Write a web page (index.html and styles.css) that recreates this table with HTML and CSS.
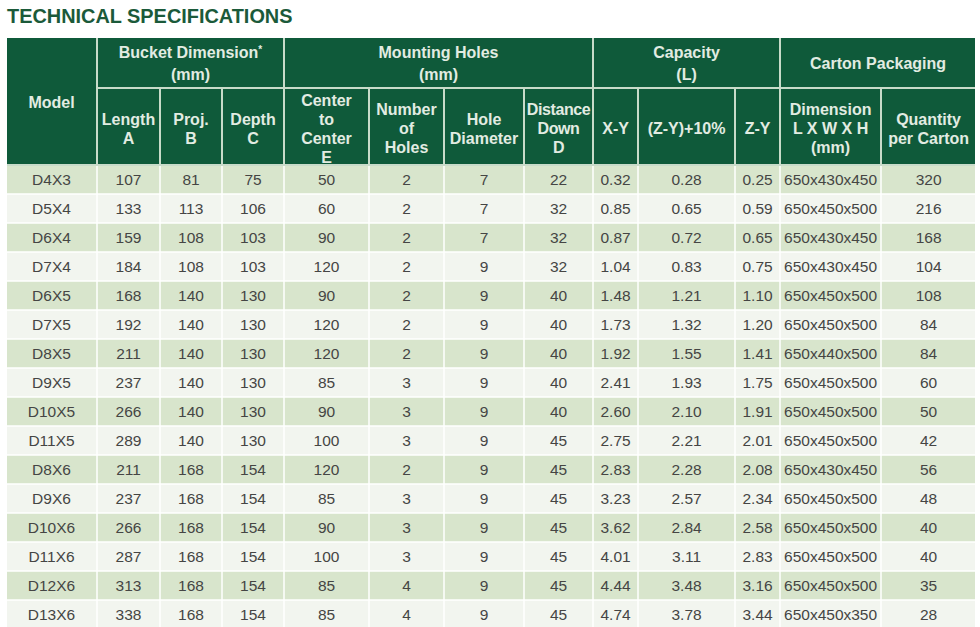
FILE: index.html
```html
<!DOCTYPE html>
<html>
<head>
<meta charset="utf-8">
<link rel="stylesheet" href="styles.css">
</head>
<body>
<div class="page">
  <h1 class="title">TECHNICAL SPECIFICATIONS</h1>
  <table class="spec">
    <colgroup>
      <col style="width:90px"><col style="width:63px"><col style="width:62px"><col style="width:62px">
      <col style="width:85px"><col style="width:75px"><col style="width:80px"><col style="width:69px">
      <col style="width:45px"><col style="width:97px"><col style="width:45px"><col style="width:101px"><col style="width:94px">
    </colgroup>
    <thead>
      <tr class="h1">
        <th rowspan="2" class="model">Model</th>
        <th colspan="3">Bucket Dimension<span class="ast">*</span><br>(mm)</th>
        <th colspan="4">Mounting Holes<br>(mm)</th>
        <th colspan="3">Capacity<br>(L)</th>
        <th colspan="2">Carton Packaging</th>
      </tr>
      <tr class="h2">
        <th><div class="hc">Length<br>A</div></th>
        <th><div class="hc">Proj.<br>B</div></th>
        <th><div class="hc">Depth<br>C</div></th>
        <th><div class="hc">Center<br>to<br>Center<br>E</div></th>
        <th><div class="hc">Number<br>of<br>Holes</div></th>
        <th><div class="hc">Hole<br>Diameter</div></th>
        <th class="tight"><div class="hc">Distance<br>Down<br>D</div></th>
        <th><div class="hc">X-Y</div></th>
        <th><div class="hc">(Z-Y)+10%</div></th>
        <th><div class="hc">Z-Y</div></th>
        <th><div class="hc">Dimension<br>L X W X H<br>(mm)</div></th>
        <th><div class="hc">Quantity<br>per Carton</div></th>
      </tr>
    </thead>
    <tbody>
      <tr><td>D4X3</td><td>107</td><td>81</td><td>75</td><td>50</td><td>2</td><td>7</td><td>22</td><td>0.32</td><td>0.28</td><td>0.25</td><td>650x430x450</td><td>320</td></tr>
      <tr><td>D5X4</td><td>133</td><td>113</td><td>106</td><td>60</td><td>2</td><td>7</td><td>32</td><td>0.85</td><td>0.65</td><td>0.59</td><td>650x450x500</td><td>216</td></tr>
      <tr><td>D6X4</td><td>159</td><td>108</td><td>103</td><td>90</td><td>2</td><td>7</td><td>32</td><td>0.87</td><td>0.72</td><td>0.65</td><td>650x430x450</td><td>168</td></tr>
      <tr><td>D7X4</td><td>184</td><td>108</td><td>103</td><td>120</td><td>2</td><td>9</td><td>32</td><td>1.04</td><td>0.83</td><td>0.75</td><td>650x430x450</td><td>104</td></tr>
      <tr><td>D6X5</td><td>168</td><td>140</td><td>130</td><td>90</td><td>2</td><td>9</td><td>40</td><td>1.48</td><td>1.21</td><td>1.10</td><td>650x450x500</td><td>108</td></tr>
      <tr><td>D7X5</td><td>192</td><td>140</td><td>130</td><td>120</td><td>2</td><td>9</td><td>40</td><td>1.73</td><td>1.32</td><td>1.20</td><td>650x450x500</td><td>84</td></tr>
      <tr><td>D8X5</td><td>211</td><td>140</td><td>130</td><td>120</td><td>2</td><td>9</td><td>40</td><td>1.92</td><td>1.55</td><td>1.41</td><td>650x440x500</td><td>84</td></tr>
      <tr><td>D9X5</td><td>237</td><td>140</td><td>130</td><td>85</td><td>3</td><td>9</td><td>40</td><td>2.41</td><td>1.93</td><td>1.75</td><td>650x450x500</td><td>60</td></tr>
      <tr><td>D10X5</td><td>266</td><td>140</td><td>130</td><td>90</td><td>3</td><td>9</td><td>40</td><td>2.60</td><td>2.10</td><td>1.91</td><td>650x450x500</td><td>50</td></tr>
      <tr><td>D11X5</td><td>289</td><td>140</td><td>130</td><td>100</td><td>3</td><td>9</td><td>45</td><td>2.75</td><td>2.21</td><td>2.01</td><td>650x450x500</td><td>42</td></tr>
      <tr><td>D8X6</td><td>211</td><td>168</td><td>154</td><td>120</td><td>2</td><td>9</td><td>45</td><td>2.83</td><td>2.28</td><td>2.08</td><td>650x430x450</td><td>56</td></tr>
      <tr><td>D9X6</td><td>237</td><td>168</td><td>154</td><td>85</td><td>3</td><td>9</td><td>45</td><td>3.23</td><td>2.57</td><td>2.34</td><td>650x450x500</td><td>48</td></tr>
      <tr><td>D10X6</td><td>266</td><td>168</td><td>154</td><td>90</td><td>3</td><td>9</td><td>45</td><td>3.62</td><td>2.84</td><td>2.58</td><td>650x450x500</td><td>40</td></tr>
      <tr><td>D11X6</td><td>287</td><td>168</td><td>154</td><td>100</td><td>3</td><td>9</td><td>45</td><td>4.01</td><td>3.11</td><td>2.83</td><td>650x450x500</td><td>40</td></tr>
      <tr><td>D12X6</td><td>313</td><td>168</td><td>154</td><td>85</td><td>4</td><td>9</td><td>45</td><td>4.44</td><td>3.48</td><td>3.16</td><td>650x450x500</td><td>35</td></tr>
      <tr><td>D13X6</td><td>338</td><td>168</td><td>154</td><td>85</td><td>4</td><td>9</td><td>45</td><td>4.74</td><td>3.78</td><td>3.44</td><td>650x450x350</td><td>28</td></tr>
    </tbody>
  </table>
</div>
</body>
</html>
```
FILE: styles.css
```css
html, body {
  margin: 0;
  padding: 0;
  background: #ffffff;
}
.page {
  padding: 4px 5px 0 7px;
  font-family: "Liberation Sans", Arial, sans-serif;
}
.title {
  margin: 0 0 10px 0;
  font-size: 19.9px;
  line-height: 24px;
  font-weight: bold;
  color: #1b5a3a;
}
.spec {
  width: 968px;
  table-layout: fixed;
  border-collapse: collapse;
}
.spec th {
  background: #0f5a3a;
  color: #e2ece2;
  font-weight: bold;
  font-size: 16px;
  text-align: center;
  vertical-align: middle;
  padding: 0;
  border: 2px solid #c8dbc9;
  white-space: nowrap;
  overflow: visible;
}
.ast {
  font-size: 10px;
  vertical-align: 5px;
  line-height: 0;
}
.spec thead tr:first-child th {
  border-top: none;
}
.spec th:first-child { border-left: none; }
.spec tr.h1 th:last-child, .spec tr.h2 th:last-child { border-right: none; }
.spec tr.h1 th {
  height: 46px;
  padding-top: 3px;
  line-height: 22px;
}
.spec tr.h1 th.model {
  padding-top: 2px;
  line-height: 19px;
}
.spec tr.h2 th {
  height: 75px;
}
.hc {
  line-height: 19px;
  margin-bottom: -4px;
}
.spec th.tight {
  letter-spacing: -0.4px;
}
.spec td {
  height: 27px;
  padding: 0;
  text-align: center;
  vertical-align: middle;
  font-size: 15.5px;
  color: #454544;
  border: 2px solid rgba(255, 255, 255, 0.75);
  white-space: nowrap;
}
.spec tbody tr:first-child td { border-top: none; }
.spec td:first-child { border-left: none; }
.spec td:last-child { border-right: none; }
.spec tbody tr:nth-child(odd) td { background: #d8e5cc; }
.spec tbody tr:nth-child(even) td { background: #f2f5ef; }
```
